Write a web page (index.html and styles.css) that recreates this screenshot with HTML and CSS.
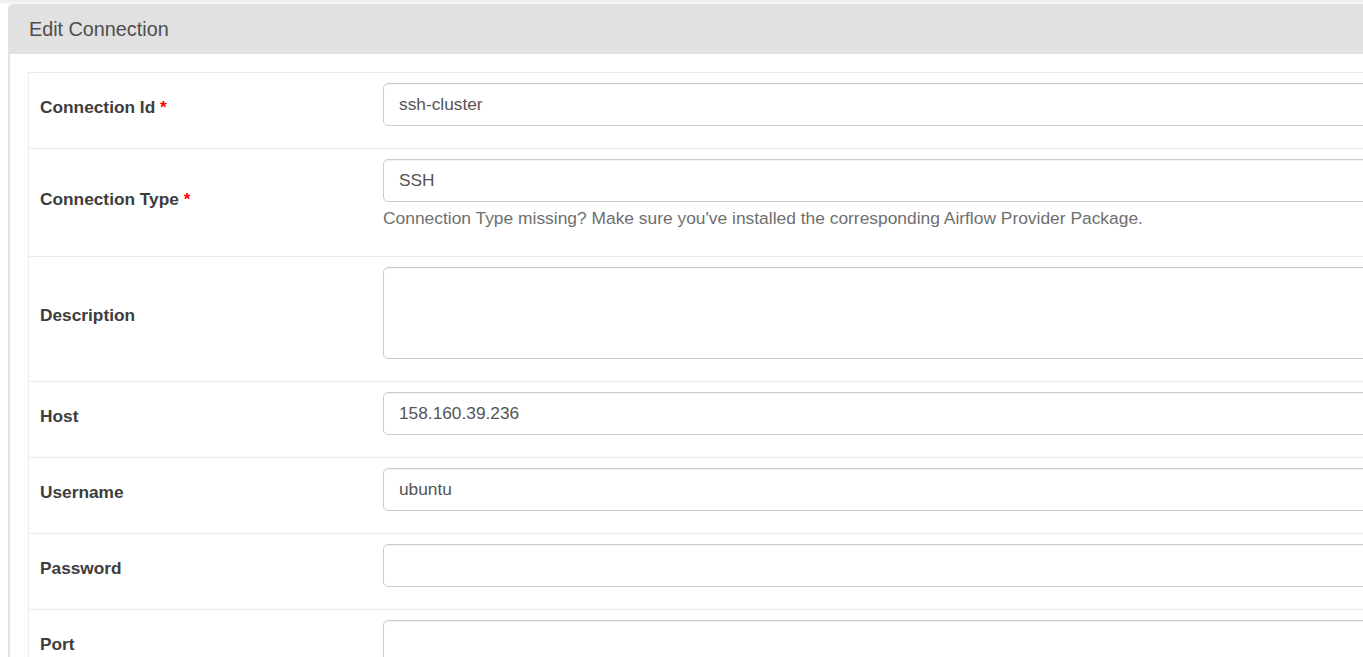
FILE: index.html
```html
<!DOCTYPE html>
<html>
<head>
<meta charset="utf-8">
<title>Edit Connection</title>
<link rel="stylesheet" href="styles.css">
</head>
<body>
<div class="topband"></div>
<div class="page">
  <div class="panel">
    <div class="panel-heading">Edit Connection</div>
    <div class="panel-body">
      <table class="form-table">
        <tr>
          <td class="label-cell"><label class="field-label">Connection Id <span class="req">*</span></label></td>
          <td class="input-cell"><div class="input">ssh-cluster</div></td>
        </tr>
        <tr>
          <td class="label-cell"><label class="field-label">Connection Type <span class="req">*</span></label></td>
          <td class="input-cell">
            <div class="input input-help">SSH</div>
            <p class="help-block">Connection Type missing? Make sure you've installed the corresponding Airflow Provider Package.</p>
          </td>
        </tr>
        <tr>
          <td class="label-cell"><label class="field-label">Description</label></td>
          <td class="input-cell"><div class="input textarea"></div></td>
        </tr>
        <tr>
          <td class="label-cell"><label class="field-label">Host</label></td>
          <td class="input-cell"><div class="input">158.160.39.236</div></td>
        </tr>
        <tr>
          <td class="label-cell"><label class="field-label">Username</label></td>
          <td class="input-cell"><div class="input">ubuntu</div></td>
        </tr>
        <tr>
          <td class="label-cell"><label class="field-label">Password</label></td>
          <td class="input-cell"><div class="input"></div></td>
        </tr>
        <tr>
          <td class="label-cell"><label class="field-label">Port</label></td>
          <td class="input-cell"><div class="input"></div></td>
        </tr>
      </table>
    </div>
  </div>
</div>
</body>
</html>
```
FILE: styles.css
```css
html, body {
  margin: 0;
  padding: 0;
  background: #ffffff;
  overflow: hidden;
  font-family: "Liberation Sans", Arial, sans-serif;
  font-size: 17.3px;
  color: #333333;
}

.topband {
  height: 4px;
  background: linear-gradient(#ededed, #f6f6f6);
}

.page {
  padding-left: 8px;
  width: 1420px;
}

.panel {
  border-left: 2px solid #e3e3e3;
  border-top-left-radius: 5px;
  background: #ffffff;
}

.panel-heading {
  height: 50px;
  box-sizing: border-box;
  padding: 0 0 0 19px;
  line-height: 50px;
  background: #e1e1e1;
  color: #4d4d4d;
  font-size: 19.8px;
  border-top-left-radius: 4px;
}

.panel-body {
  padding: 18px 0 0 18px;
}

.form-table {
  width: 100%;
  border-collapse: collapse;
  border-left: 1px solid #ececec;
}

.form-table td {
  border-top: 1px solid #ececec;
  padding: 10px;
  vertical-align: middle;
}

.label-cell {
  width: 322px;
  padding-left: 11px !important;
}

.field-label {
  display: inline-block;
  font-weight: bold;
  color: #3d3d3d;
  margin-bottom: 8px;
  line-height: 24px;
}

.req {
  color: #ff0000;
}

.input-cell {
  padding-left: 11px !important;
}

.input {
  height: 43px;
  box-sizing: border-box;
  border: 1px solid #cccccc;
  border-radius: 5px;
  padding: 0 15px;
  line-height: 41px;
  color: #555555;
  margin-bottom: 12px;
  box-shadow: inset 0 1px 1px rgba(0, 0, 0, 0.06);
}

.input.input-help {
  margin-bottom: 5px;
}

.input.textarea {
  height: 92px;
}

.help-block {
  margin: 0 0 17px 0;
  line-height: 22px;
  font-size: 17.4px;
  color: #6f6f6f;
}
```
